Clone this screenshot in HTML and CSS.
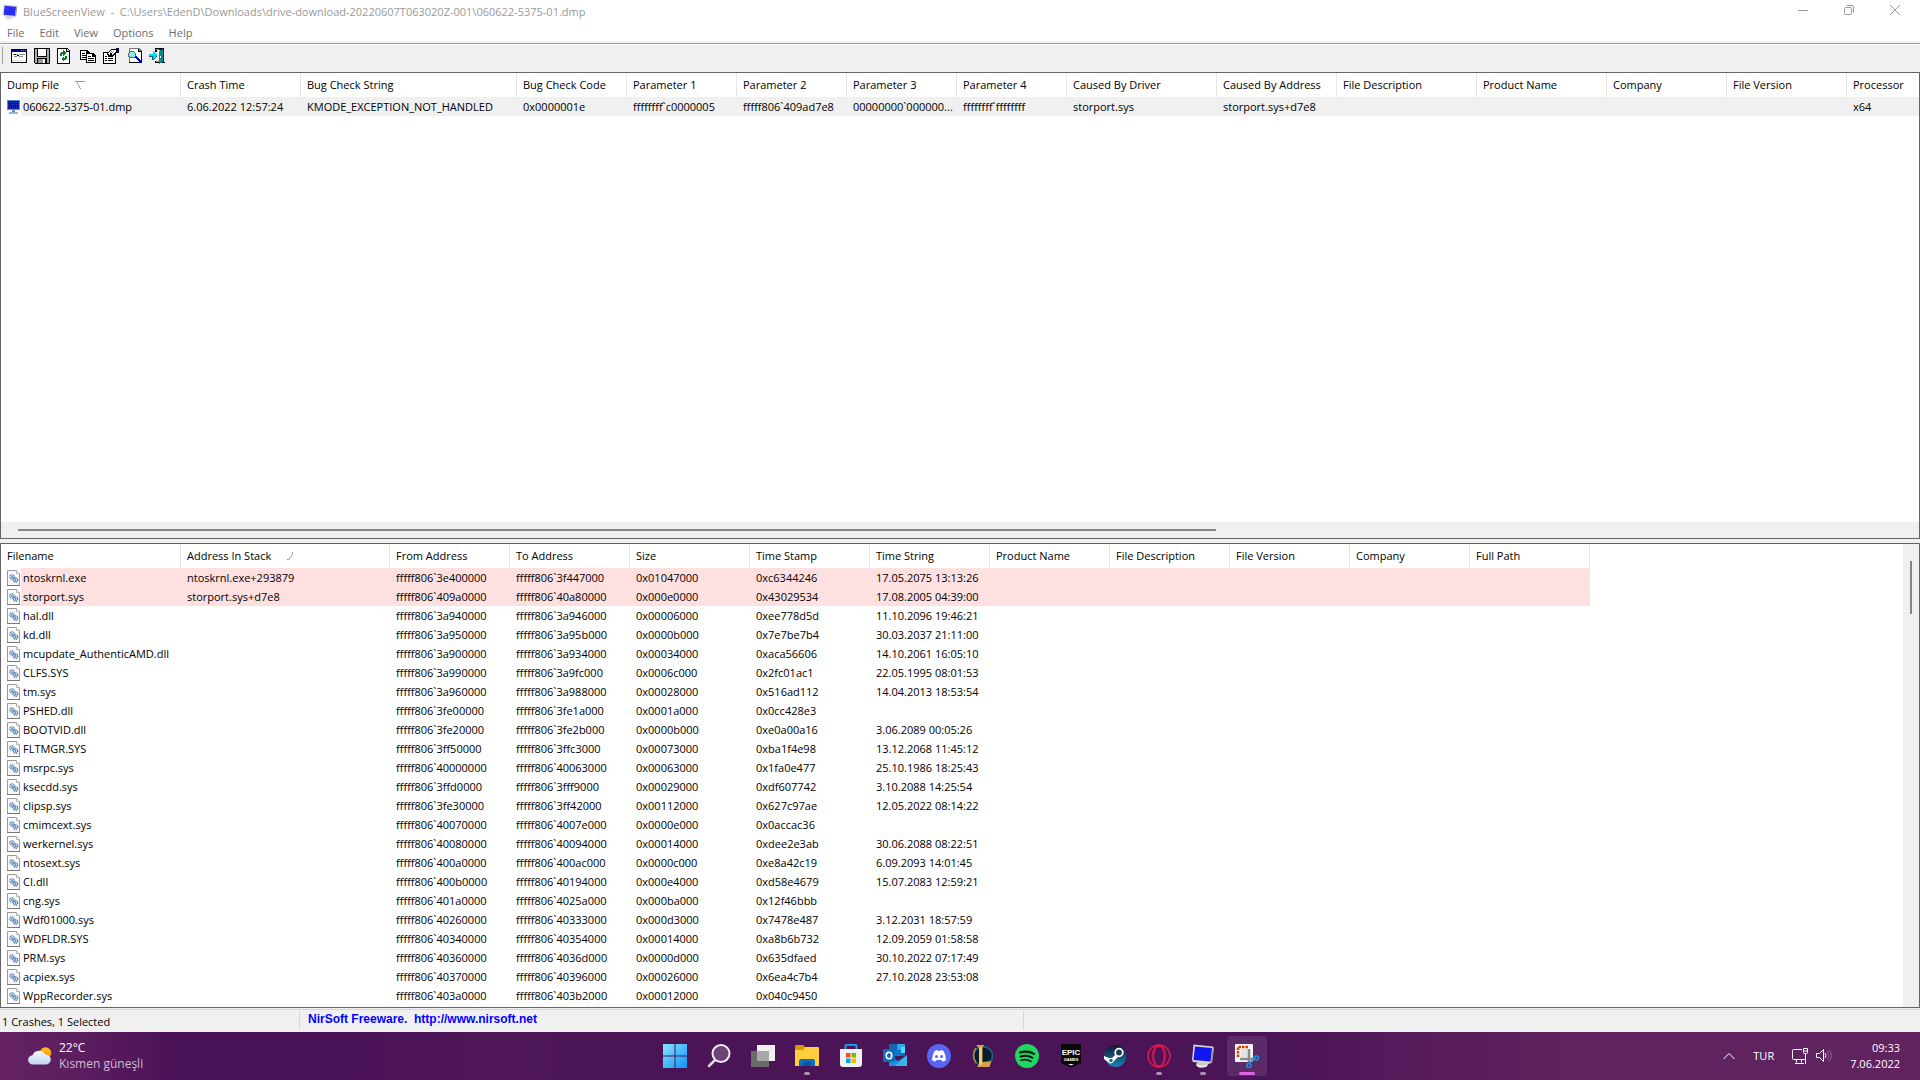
FILE: index.html
```html
<!DOCTYPE html>
<html lang="en">
<head>
    <meta charset="UTF-8">
    <meta name="viewport" content="width=device-width, initial-scale=1.0">
    <title>BlueScreenView</title>
    <link rel="stylesheet" href="styles.css">
</head>
<body>

    <!-- shared icons -->
    <svg class="sprite" aria-hidden="true">
        <symbol id="sysfile" viewBox="0 0 13 16">
            <path d="M.5.5h9l3 3v12H.5z" fill="#f9f9f9" stroke="#999"/>
            <path d="M9.500.5v3h3" fill="#fff" stroke="#b5b5b5"/>
            <path d="M0 15.500h13" stroke="#777"/>
            <circle cx="5" cy="7" r="2.200" fill="#e4eefa" stroke="#4d79ad" stroke-width="1.300" stroke-dasharray="1.200 .6"/>
            <circle cx="8.500" cy="10" r="2.200" fill="#cfe0f5" stroke="#3c689f" stroke-width="1.300" stroke-dasharray="1.200 .6"/>
            <circle cx="5" cy="7" r=".8" fill="#24548c"/>
            <circle cx="8.500" cy="10" r=".7" fill="#24548c"/>
        </symbol>
        <symbol id="bluemonitor" viewBox="0 0 24 24">
            <path d="M8 17l8 1 1 3-2 2-7 .5-3-2 .5-2z" fill="#c9c9c9"/>
            <path d="M6 20c3 2 8 2 10 0v2c-3 2-8 2-10 0z" fill="#eee"/>
            <path d="M2.500.5L22 2.500l1 1-2 15.500-4 1-15-2L1 16z" fill="#d5d2cc"/>
            <path d="M4 2.500l17 1.500-1.500 13.500L2.500 16z" fill="#1216f0"/>
            <path d="M22 3l1 .5-2 15.500-1.500-.5z" fill="#8f8c88"/>
        </symbol>
    </svg>

    <header class="titlebar">
        <svg class="app-icon" viewBox="0 0 24 24"><use href="#bluemonitor"/></svg>
        <h1>BlueScreenView&nbsp; -&nbsp; C:\Users\EdenD\Downloads\drive-download-20220607T063020Z-001\060622-5375-01.dmp</h1>
        <div class="window-buttons">
            <button aria-label="Minimize"><svg viewBox="0 0 10 10"><path d="M0 5.500h10"/></svg></button>
            <button aria-label="Restore"><svg viewBox="0 0 10 10"><rect x=".5" y="2.500" width="7" height="7" rx="1"/><path d="M2.500.5H8q1.500 0 1.500 1.500v5.500"/></svg></button>
            <button aria-label="Close"><svg viewBox="0 0 10 10"><path d="M0 0l10 10M10 0L0 10"/></svg></button>
        </div>
    </header>

    <nav class="menu">
        <button>File</button>
        <button>Edit</button>
        <button>View</button>
        <button>Options</button>
        <button>Help</button>
    </nav>

    <div class="toolbar">
        <button aria-label="Advanced options">
            <svg viewBox="0 0 16 16"><path d="M0 1h16v14H0z" fill="#000"/><path d="M1 2h14v12H1z" fill="#fff"/><path d="M1 2h14v2H1z" fill="#000080"/><path d="M10 2h1v1h-1zM12 2h1v1h-1zM14 2h1v1h-1zM2 6h5v1H2zM8 6h6v1H8zM3 8h3v1H3zM8 8h4v1H8z" fill="#888"/><path d="M3 6h2v1H3zM6 7h2v1H6z" fill="#000"/><path d="M1 12h14v1H1z" fill="#ddd"/></svg>
        </button>
        <button aria-label="Save">
            <svg viewBox="0 0 16 16"><path d="M0 0h16v16H1l-1-1z" fill="#000"/><path d="M1 1h2v8h10V1h2v14H1z" fill="#aaa"/><path d="M4 1h8v7H4z" fill="#fff"/><path d="M3 10h10v6H3z" fill="#000"/><path d="M4 11h7v4H4z" fill="#999"/><path d="M9 11h2v4H9z" fill="#fff"/></svg>
        </button>
        <button aria-label="Refresh">
            <svg viewBox="0 0 16 16"><path d="M0 0h10l3 3v13H0z" fill="#000"/><path d="M1 1h8v3h3v11H1z" fill="#fff"/><path d="M10 1v2h2z" fill="#ddd"/><path d="M3 8V5h1V4h2V2l3 3-3 3V6H5v2zM10 8v3H9v1H7v2l-3-3 3-3v2h1V8z" fill="#008020"/></svg>
        </button>
        <button aria-label="Copy">
            <svg viewBox="0 0 16 16"><path d="M0 2h7l3 3v7H0z" fill="#000"/><path d="M1 3h5v3h3v5H1z" fill="#fff"/><path d="M2 5h3v1H2zM2 7h5v1H2zM2 9h5v1H2z" fill="#000"/><path d="M6 5h7l3 3v7H6z" fill="#000"/><path d="M7 6h5v3h3v5H7z" fill="#fff"/><path d="M8 8h3v1H8zM8 10h6v1H8zM8 12h6v1H8z" fill="#000"/></svg>
        </button>
        <button aria-label="Properties">
            <svg viewBox="0 0 16 16"><path d="M0 4h13v12H0z" fill="#000"/><path d="M1 5h11v10H1z" fill="#fff"/><path d="M2 8h2v1H2zM5 8h3v1H5zM2 10h2v1H2zM5 10h5v1H5zM2 12h2v1H2zM5 12h5v1H5z" fill="#000"/><path d="M4 5l4-4h5V0h3v5h-3l-4 4-2-1-2 1z" fill="#000"/><path d="M5 5h1V4h1V3h1V2h5v2h-1v1h-1v1h-1v1H9V5H7v2H6z" fill="#fff"/><path d="M8 3h1v1H8zM10 3h1v1h-1zM9 4h1v1H9zM7 4h1v1H7z" fill="#888"/><path d="M14 0h2v5h-2z" fill="#000080"/></svg>
        </button>
        <button aria-label="Find">
            <svg viewBox="0 0 16 16"><path d="M3 0h10l3 3v12H3z" fill="#777"/><path d="M4 1h8v3h3v10H4z" fill="#fff"/><path d="M12 1h1v2h2v1h-3zM15 3h1v12h-1zM3 14h13v1H3z" fill="#000"/><path d="M3 3h5v1h1v1h1v4H9v1H4V9H2V5h1z" fill="#567"/><path d="M4 4h4v1h1v4H4V8H3V5h1z" fill="#7ee"/><path d="M5 4h1v1H5zM7 5h1v1H7zM4 6h1v1H4zM6 7h1v1H6z" fill="#fff"/><path d="M9 8h2v1h1v1h1v1h1v1h1v1h1v2h-2v-1h-1v-1h-1v-1h-1v-1h-1v-1H9z" fill="#0000c8"/></svg>
        </button>
        <button aria-label="Exit">
            <svg viewBox="0 0 16 16"><path d="M6 0h9v14h1v1H6v-2h1v1h4V2H8v2H6z" fill="#000"/><path d="M7 1h3v1H7zM7 13h3v1H7z" fill="#888"/><path d="M10 3l4-2v13l-4 2z" fill="#008c8c"/><path d="M11 8h1v2h-1z" fill="#fff"/><path d="M14 1h1v13h-1z" fill="#222"/><path d="M0 6h4V3h1v1h1v1h1v1h1v2H7v1H6v1H5v1H4V8H0z" fill="#00dcec"/><path d="M0 8h4v3h1v-1h1V9h1V8h1v1H7v1H6v1H5v1H3V9H0z" fill="#067"/></svg>
        </button>
    </div>

    <main class="panes">
        <section class="pane crashes">
            <div class="pane-body">
                <table class="list crash-list">
                    <colgroup>
                        <col class="w180"><col class="w120"><col class="w216"><col class="w110"><col class="w110"><col class="w110"><col class="w110"><col class="w110"><col class="w150"><col class="w120"><col class="w140"><col class="w130"><col class="w120"><col class="w120"><col>
                    </colgroup>
                    <thead>
                        <tr>
                            <th>Dump File <svg class="sort sort-first" viewBox="0 0 10 8"><path d="M0 .5h10M2 1l3 6.500h1"/></svg></th>
                            <th>Crash Time</th>
                            <th>Bug Check String</th>
                            <th>Bug Check Code</th>
                            <th>Parameter 1</th>
                            <th>Parameter 2</th>
                            <th>Parameter 3</th>
                            <th>Parameter 4</th>
                            <th>Caused By Driver</th>
                            <th>Caused By Address</th>
                            <th>File Description</th>
                            <th>Product Name</th>
                            <th>Company</th>
                            <th>File Version</th>
                            <th>Processor</th>
                        </tr>
                    </thead>
                    <tbody>
                        <tr class="selected">
                            <td class="name"><span class="icon"><svg viewBox="0 0 13 14"><path d="M0 0h13v10H0z" fill="#4b8fd0"/><path d="M1 1h11v8H1z" fill="#0a0aa8"/><path d="M1 2.500h11M1 4.500h11M1 6.500h11M1 8.500h11" stroke="#2f3fc4" stroke-dasharray="1 1"/><path d="M5 10h3v2H5z" fill="#5c8db8"/><path d="M2 12h9v2H2z" fill="#9fb4c6"/></svg></span>060622-5375-01.dmp</td>
                            <td>6.06.2022 12:57:24</td>
                            <td>KMODE_EXCEPTION_NOT_HANDLED</td>
                            <td>0x0000001e</td>
                            <td>ffffffff`c0000005</td>
                            <td>fffff806`409ad7e8</td>
                            <td>00000000`000000...</td>
                            <td>ffffffff`ffffffff</td>
                            <td>storport.sys</td>
                            <td>storport.sys+d7e8</td>
                            <td></td><td></td><td></td><td></td>
                            <td>x64</td>
                        </tr>
                    </tbody>
                </table>
            </div>
            <div class="scroll-x"><div class="thumb"></div></div>
        </section>

        <section class="pane drivers">
            <div class="pane-body">
                <table class="list driver-list">
                    <colgroup>
                        <col class="w180"><col class="w209"><col span="10" class="w120">
                    </colgroup>
                    <thead>
                        <tr>
                            <th>Filename</th>
                            <th>Address In Stack <svg class="sort" viewBox="0 0 6 8"><path d="M5.500 0v2L2 7.500H0"/></svg></th>
                            <th>From Address</th>
                            <th>To Address</th>
                            <th>Size</th>
                            <th>Time Stamp</th>
                            <th>Time String</th>
                            <th>Product Name</th>
                            <th>File Description</th>
                            <th>File Version</th>
                            <th>Company</th>
                            <th>Full Path</th>
                        </tr>
                    </thead>
                    <tbody>
                        <tr class="in-stack"><td class="name"><span class="icon"><svg><use href="#sysfile"/></svg></span>ntoskrnl.exe</td><td>ntoskrnl.exe+293879</td><td>fffff806`3e400000</td><td>fffff806`3f447000</td><td>0x01047000</td><td>0xc6344246</td><td>17.05.2075 13:13:26</td><td colspan="5"></td></tr>
                        <tr class="in-stack"><td class="name"><span class="icon"><svg><use href="#sysfile"/></svg></span>storport.sys</td><td>storport.sys+d7e8</td><td>fffff806`409a0000</td><td>fffff806`40a80000</td><td>0x000e0000</td><td>0x43029534</td><td>17.08.2005 04:39:00</td><td colspan="5"></td></tr>
                        <tr><td class="name"><span class="icon"><svg><use href="#sysfile"/></svg></span>hal.dll</td><td></td><td>fffff806`3a940000</td><td>fffff806`3a946000</td><td>0x00006000</td><td>0xee778d5d</td><td>11.10.2096 19:46:21</td></tr>
                        <tr><td class="name"><span class="icon"><svg><use href="#sysfile"/></svg></span>kd.dll</td><td></td><td>fffff806`3a950000</td><td>fffff806`3a95b000</td><td>0x0000b000</td><td>0x7e7be7b4</td><td>30.03.2037 21:11:00</td></tr>
                        <tr><td class="name"><span class="icon"><svg><use href="#sysfile"/></svg></span>mcupdate_AuthenticAMD.dll</td><td></td><td>fffff806`3a900000</td><td>fffff806`3a934000</td><td>0x00034000</td><td>0xaca56606</td><td>14.10.2061 16:05:10</td></tr>
                        <tr><td class="name"><span class="icon"><svg><use href="#sysfile"/></svg></span>CLFS.SYS</td><td></td><td>fffff806`3a990000</td><td>fffff806`3a9fc000</td><td>0x0006c000</td><td>0x2fc01ac1</td><td>22.05.1995 08:01:53</td></tr>
                        <tr><td class="name"><span class="icon"><svg><use href="#sysfile"/></svg></span>tm.sys</td><td></td><td>fffff806`3a960000</td><td>fffff806`3a988000</td><td>0x00028000</td><td>0x516ad112</td><td>14.04.2013 18:53:54</td></tr>
                        <tr><td class="name"><span class="icon"><svg><use href="#sysfile"/></svg></span>PSHED.dll</td><td></td><td>fffff806`3fe00000</td><td>fffff806`3fe1a000</td><td>0x0001a000</td><td>0x0cc428e3</td><td></td></tr>
                        <tr><td class="name"><span class="icon"><svg><use href="#sysfile"/></svg></span>BOOTVID.dll</td><td></td><td>fffff806`3fe20000</td><td>fffff806`3fe2b000</td><td>0x0000b000</td><td>0xe0a00a16</td><td>3.06.2089 00:05:26</td></tr>
                        <tr><td class="name"><span class="icon"><svg><use href="#sysfile"/></svg></span>FLTMGR.SYS</td><td></td><td>fffff806`3ff50000</td><td>fffff806`3ffc3000</td><td>0x00073000</td><td>0xba1f4e98</td><td>13.12.2068 11:45:12</td></tr>
                        <tr><td class="name"><span class="icon"><svg><use href="#sysfile"/></svg></span>msrpc.sys</td><td></td><td>fffff806`40000000</td><td>fffff806`40063000</td><td>0x00063000</td><td>0x1fa0e477</td><td>25.10.1986 18:25:43</td></tr>
                        <tr><td class="name"><span class="icon"><svg><use href="#sysfile"/></svg></span>ksecdd.sys</td><td></td><td>fffff806`3ffd0000</td><td>fffff806`3fff9000</td><td>0x00029000</td><td>0xdf607742</td><td>3.10.2088 14:25:54</td></tr>
                        <tr><td class="name"><span class="icon"><svg><use href="#sysfile"/></svg></span>clipsp.sys</td><td></td><td>fffff806`3fe30000</td><td>fffff806`3ff42000</td><td>0x00112000</td><td>0x627c97ae</td><td>12.05.2022 08:14:22</td></tr>
                        <tr><td class="name"><span class="icon"><svg><use href="#sysfile"/></svg></span>cmimcext.sys</td><td></td><td>fffff806`40070000</td><td>fffff806`4007e000</td><td>0x0000e000</td><td>0x0accac36</td><td></td></tr>
                        <tr><td class="name"><span class="icon"><svg><use href="#sysfile"/></svg></span>werkernel.sys</td><td></td><td>fffff806`40080000</td><td>fffff806`40094000</td><td>0x00014000</td><td>0xdee2e3ab</td><td>30.06.2088 08:22:51</td></tr>
                        <tr><td class="name"><span class="icon"><svg><use href="#sysfile"/></svg></span>ntosext.sys</td><td></td><td>fffff806`400a0000</td><td>fffff806`400ac000</td><td>0x0000c000</td><td>0xe8a42c19</td><td>6.09.2093 14:01:45</td></tr>
                        <tr><td class="name"><span class="icon"><svg><use href="#sysfile"/></svg></span>CI.dll</td><td></td><td>fffff806`400b0000</td><td>fffff806`40194000</td><td>0x000e4000</td><td>0xd58e4679</td><td>15.07.2083 12:59:21</td></tr>
                        <tr><td class="name"><span class="icon"><svg><use href="#sysfile"/></svg></span>cng.sys</td><td></td><td>fffff806`401a0000</td><td>fffff806`4025a000</td><td>0x000ba000</td><td>0x12f46bbb</td><td></td></tr>
                        <tr><td class="name"><span class="icon"><svg><use href="#sysfile"/></svg></span>Wdf01000.sys</td><td></td><td>fffff806`40260000</td><td>fffff806`40333000</td><td>0x000d3000</td><td>0x7478e487</td><td>3.12.2031 18:57:59</td></tr>
                        <tr><td class="name"><span class="icon"><svg><use href="#sysfile"/></svg></span>WDFLDR.SYS</td><td></td><td>fffff806`40340000</td><td>fffff806`40354000</td><td>0x00014000</td><td>0xa8b6b732</td><td>12.09.2059 01:58:58</td></tr>
                        <tr><td class="name"><span class="icon"><svg><use href="#sysfile"/></svg></span>PRM.sys</td><td></td><td>fffff806`40360000</td><td>fffff806`4036d000</td><td>0x0000d000</td><td>0x635dfaed</td><td>30.10.2022 07:17:49</td></tr>
                        <tr><td class="name"><span class="icon"><svg><use href="#sysfile"/></svg></span>acpiex.sys</td><td></td><td>fffff806`40370000</td><td>fffff806`40396000</td><td>0x00026000</td><td>0x6ea4c7b4</td><td>27.10.2028 23:53:08</td></tr>
                        <tr><td class="name"><span class="icon"><svg><use href="#sysfile"/></svg></span>WppRecorder.sys</td><td></td><td>fffff806`403a0000</td><td>fffff806`403b2000</td><td>0x00012000</td><td>0x040c9450</td><td></td></tr>
                        <tr><td class="name"><span class="icon"><svg><use href="#sysfile"/></svg></span></td></tr>
                    </tbody>
                </table>
            </div>
            <div class="scroll-y"><div class="thumb"></div></div>
        </section>
    </main>

    <footer class="status">
        <div class="status-count">1 Crashes, 1 Selected</div>
        <div class="status-link"><a href="http://www.nirsoft.net">NirSoft Freeware.&nbsp; http://www.nirsoft.net</a></div>
        <div class="status-rest"></div>
    </footer>

    <div class="taskbar">
        <button class="weather">
            <svg viewBox="0 0 24 18">
                <defs>
                    <linearGradient id="cloud" x2="0" y2="1"><stop stop-color="#f7f9fd"/><stop offset="1" stop-color="#bfd3ee"/></linearGradient>
                    <linearGradient id="sun" x2="0" y2="1"><stop stop-color="#ffc21a"/><stop offset="1" stop-color="#f58a0b"/></linearGradient>
                </defs>
                <circle cx="17.500" cy="6" r="5.800" fill="url(#sun)"/>
                <path d="M5 17.500a4.600 4.600 0 0 1-.5-9.200A6.800 6.800 0 0 1 17 7.500a5 5 0 0 1 1.500 10z" fill="url(#cloud)"/>
            </svg>
            <span><span class="temp">22°C</span><span class="sky">Kısmen güneşli</span></span>
        </button>

        <nav class="apps">
            <button aria-label="Start">
                <svg viewBox="0 0 24 24"><defs><linearGradient id="win" x2="1" y2="1"><stop stop-color="#8be3ff"/><stop offset="1" stop-color="#0a93f5"/></linearGradient></defs><path d="M0 0h11.500v11.500H0zM12.500 0H24v11.500H12.500zM0 12.500h11.500V24H0zM12.500 12.500H24V24H12.500z" fill="url(#win)"/></svg>
            </button>
            <button aria-label="Search">
                <svg viewBox="0 0 24 24"><circle cx="14" cy="9.500" r="8.500" fill="#fff" fill-opacity=".2" stroke="#eee" stroke-width="2"/><path d="M8 16l-6 6" stroke="#ddd" stroke-width="2.500" stroke-linecap="round"/></svg>
            </button>
            <button aria-label="Task View">
                <svg viewBox="0 0 24 24"><path d="M6 1h18v16H6z" fill="#f0f0f0"/><path d="M0 7h18v16H0z" fill="#6a6a6a"/><path d="M6 7h12v10H6z" fill="#a8a8a8"/></svg>
            </button>
            <button aria-label="File Explorer" class="running">
                <svg viewBox="0 0 24 24"><path d="M0 2q0-1 1-1h7l2 2v4H0z" fill="#dd9500"/><path d="M0 6h8l2-3h13q1 0 1 1v17q0 1-1 1H0z" fill="#ffce3d"/><path d="M4 22v-5q0-2 2-2h12q2 0 2 2v5z" fill="#0c6fc0"/><path d="M8 18h8v4H8z" fill="#0a559b"/></svg>
            </button>
            <button aria-label="Microsoft Store">
                <svg viewBox="0 0 24 24"><path d="M6.500 6V2q0-1.200 1.200-1.200h8.600q1.200 0 1.200 1.200v4" fill="none" stroke="#1ea8ee" stroke-width="1.800"/><path d="M1 5h22v15q0 3-3 3H4q-3 0-3-3z" fill="#f1f1f1"/><path d="M7 9h4.500v4.500H7z" fill="#f04f24"/><path d="M12.500 9H17v4.500h-4.500z" fill="#7eba00"/><path d="M7 14.500h4.500V19H7z" fill="#02a4ef"/><path d="M12.500 14.500H17V19h-4.500z" fill="#ffb901"/></svg>
            </button>
            <button aria-label="Outlook">
                <svg viewBox="0 0 24 24"><path d="M7 0h14q1 0 1 1v11H6V1q0-1 1-1z" fill="#1066b5"/><path d="M14 0h8v6h-8z" fill="#28a8ea"/><path d="M18 3h4v6h-4z" fill="#50d9ff"/><path d="M11 6h7v6h-7z" fill="#0b78d0"/><path d="M6 12l9 5 9-6v11H6z" fill="#1490df"/><path d="M12 22l12-11v11z" fill="#38b7ef"/><rect y="5" width="12" height="13" rx="1" fill="#0f6cbd"/><ellipse cx="6" cy="11.500" rx="2.800" ry="3.300" fill="none" stroke="#fff" stroke-width="1.600"/></svg>
            </button>
            <button aria-label="Discord">
                <svg viewBox="0 0 24 24"><circle cx="12" cy="12" r="12" fill="#5865f2"/><path d="M7.500 7q2-1 3-1l.5 1h2l.5-1q1 0 3 1 2.500 4 2.500 9-2 1.500-3.500 1.500L14.500 16h-5l-1 1.500Q7 17.500 5 16q0-5 2.500-9z" fill="#fff"/><circle cx="9.500" cy="12.500" r="1.500" fill="#5865f2"/><circle cx="14.500" cy="12.500" r="1.500" fill="#5865f2"/></svg>
            </button>
            <button aria-label="League of Legends">
                <svg viewBox="0 0 24 24"><circle cx="12" cy="12" r="9.500" fill="#071e30" stroke="#1c6c82" stroke-width="1.500"/><path d="M5 4q-5 7 0 15" fill="none" stroke="#b68a3c" stroke-width="1.500"/><path d="M5 1h8l-1.500 3v14l9-1-2 6H6l2-3V4z" fill="#d3a24a"/><path d="M8 4l3-1v17l-3 2z" fill="#f0cd78"/></svg>
            </button>
            <button aria-label="Spotify">
                <svg viewBox="0 0 24 24"><circle cx="12" cy="12" r="12" fill="#1ed760"/><g fill="none" stroke="#10131a" stroke-linecap="round"><path d="M5 8.500q7.500-2.300 14 1.400" stroke-width="2.200"/><path d="M5.500 12.500q6.500-2 12 1.200" stroke-width="1.900"/><path d="M6 16.200q5.500-1.500 10 1.200" stroke-width="1.600"/></g></svg>
            </button>
            <button aria-label="Epic Games">
                <svg viewBox="0 0 24 24"><path d="M2 1q0-1 1-1h18q1 0 1 1v18l-10 4.500L2 19z" fill="#080808"/><text x="12" y="11" class="epic" font-size="8" text-anchor="middle">EPIC</text><text x="12" y="17" class="games" font-size="4" text-anchor="middle">GAMES</text><path d="M9 20h6l-3 1.500z" fill="#eee"/></svg>
            </button>
            <button aria-label="Steam">
                <svg viewBox="0 0 24 24"><defs><linearGradient id="steam" x2="0" y2="1"><stop stop-color="#10172c"/><stop offset="1" stop-color="#1786b8"/></linearGradient></defs><circle cx="12.500" cy="12" r="11" fill="url(#steam)"/><path d="M1 12l7 3 4-4 3 2-5 5q-2 3-5 0L1 15z" fill="#fff"/><circle cx="16" cy="8.500" r="3.800" fill="#26324a" stroke="#fff" stroke-width="1.800"/><circle cx="8" cy="16.500" r="2.200" fill="#196487" stroke="#fff"/></svg>
            </button>
            <button aria-label="Opera GX" class="running">
                <svg viewBox="0 0 24 24"><g fill="none" stroke="#e8174b" stroke-width="1.400"><circle cx="12" cy="12" r="11"/><ellipse cx="12" cy="12" rx="5.500" ry="10.500"/><path d="M14 1.500q-9 1-9 10.500t9 10.500" stroke-width=".7"/><path d="M10 1.500q9 1 9 10.500t-9 10.500" stroke-width=".7"/></g></svg>
            </button>
            <button aria-label="BlueScreenView" class="running">
                <svg viewBox="0 0 24 24"><use href="#bluemonitor"/></svg>
            </button>
            <button aria-label="Snipping Tool" class="running active">
                <svg viewBox="0 0 24 24"><rect width="18" height="18" rx="1" fill="#f4f4f4"/><path d="M3 13V3h11" fill="none" stroke="#d83b01" stroke-width="2.500" stroke-dasharray="2.500 1"/><path d="M6 5h8v8H6z" fill="#e2e2e2"/><path d="M14 5v13M5 15h14" stroke="#8b8b8b" stroke-width="2.500"/><circle cx="14" cy="21.500" r="2" fill="none" stroke="#1695e6" stroke-width="1.600"/><circle cx="21.500" cy="14" r="2" fill="none" stroke="#1695e6" stroke-width="1.600"/><path d="M14.500 19l5-4" stroke="#1695e6" stroke-width="1.600"/></svg>
            </button>
        </nav>

        <div class="tray">
            <button aria-label="Show hidden icons"><svg class="chevron" viewBox="0 0 12 8"><path d="M.5 7L6 1.500 11.500 7"/></svg></button>
            <button class="lang">TUR</button>
            <button class="net-sound" aria-label="Network and volume">
                <svg viewBox="0 0 16 16"><path d="M10 1.500H1.500q-1 0-1 1v8q0 1 1 1H13M4.500 11.500v3M9.500 11.500v3M3 15.500h9M13.500 6v10M11.500.5h4v4q0 1-1 1h-2q-1 0-1-1zM11.500 3h4"/></svg>
                <svg viewBox="0 0 16 16"><path d="M.5 5.500h3l4-4v12l-4-4h-3zM9 5q2 2.500 0 5"/><path class="faint" d="M11 3q4 4.500 0 9M13 1.500q5 6 0 12"/></svg>
            </button>
            <button class="clock"><span>09:33</span><span>7.06.2022</span></button>
        </div>
    </div>

</body>
</html>
```

FILE: styles.css
```css
* {
    box-sizing: border-box;
}
body {
    margin: 0;
    height: 100vh;
    display: flex;
    flex-direction: column;
    overflow: hidden;
    background-color: #fff;
    color: #000;
    font-family: "Open Sans", "Noto Sans", sans-serif;
    font-size: 11px;
    line-height: 16px;
}
button {
    margin: 0;
    padding: 0;
    border: none;
    background: none;
    color: inherit;
    font: inherit;
}
svg {
    display: block;
}
.sprite {
    position: absolute;
    width: 0;
    height: 0;
}

/* title and menu */
.titlebar {
    display: flex;
    align-items: center;
    height: 24px;
    padding: 0 2px;
    color: #999;
    flex-shrink: 0;
}
.app-icon {
    width: 16px;
    height: 16px;
    opacity: 0.9;
}
.titlebar h1 {
    margin: 0 auto 0 5px;
    font-size: 11px;
    font-weight: normal;
}
.window-buttons {
    display: flex;
    align-self: stretch;
    padding-bottom: 4px;
}
.window-buttons button {
    display: flex;
    align-items: center;
    justify-content: center;
    width: 46px;
}
.window-buttons svg {
    width: 10px;
    height: 10px;
    fill: none;
    stroke: #999;
}
.menu {
    display: flex;
    gap: 15px;
    height: 17px;
    padding-left: 7px;
    color: #6d6d6d;
    flex-shrink: 0;
}
.toolbar {
    display: flex;
    align-items: flex-end;
    height: 31px;
    padding: 0 0 8px 7px;
    border-top: 2px solid #f0f0f0;
    background: linear-gradient(#a0a0a0 0 1px, #fff 1px 2px, #f0f0f0 2px);
    flex-shrink: 0;
}
.toolbar::before {
    content: "";
    width: 1px;
    height: 17px;
    margin: 0 4px 0 -5px;
    background-color: #a0a0a0;
}
.toolbar button {
    display: flex;
    justify-content: center;
    width: 23px;
}
.toolbar svg {
    width: 16px;
    height: 16px;
    shape-rendering: crispEdges;
}

/* list panes */
.panes {
    flex: 1;
    min-height: 0;
    display: flex;
    flex-direction: column;
    gap: 4px;
    background-color: #f0f0f0;
}
.pane {
    display: flex;
    min-height: 0;
    border: 1px solid #646464;
    background-color: #fff;
}
.crashes {
    flex: 467 1 0;
    flex-direction: column;
}
.drivers {
    flex: 465 1 0;
}
.pane-body {
    flex: 1;
    min-width: 0;
    min-height: 0;
    overflow: hidden;
}
.list {
    table-layout: fixed;
    border-collapse: collapse;
}
.crash-list {
    width: 100%;
}
.driver-list {
    width: 1589px;
}
.w110 { width: 110px; }
.w120 { width: 120px; }
.w130 { width: 130px; }
.w140 { width: 140px; }
.w150 { width: 150px; }
.w180 { width: 180px; }
.w209 { width: 209px; }
.w216 { width: 216px; }
.list th, .list td {
    padding: 0 0 0 6px;
    text-align: left;
    font-weight: normal;
    white-space: nowrap;
    overflow: hidden;
}
.list th {
    height: 24px;
    background: linear-gradient(#e5e5e5, #e5e5e5) right / 1px 100% no-repeat;
}
.crash-list th:last-child {
    background: none;
}
.list td {
    height: 19px;
}
.list td.name {
    padding: 0;
}
.icon {
    display: inline-flex;
    align-items: center;
    justify-content: flex-end;
    width: 20px;
    height: 19px;
    margin-right: 2px;
    padding-right: 1px;
    background-color: #fff;
    vertical-align: top;
}
.name {
    line-height: 19px;
}
.icon svg {
    width: 13px;
    height: 16px;
}
.selected {
    background-color: #f0f0f0;
}
.in-stack {
    background-color: #ffe0e0;
}
.sort {
    display: inline-block;
    width: 6px;
    height: 8px;
    margin-left: 13px;
    fill: none;
    stroke: #999;
}
.sort-first {
    width: 10px;
}
.scroll-x {
    height: 16px;
    padding: 7px 0 0 17px;
    background-color: #f0f0f0;
}
.scroll-x .thumb {
    width: 63%;
    height: 2px;
    background-color: #868686;
}
.scroll-y {
    width: 16px;
    padding: 17px 0 0 7px;
    background-color: #f0f0f0;
}
.scroll-y .thumb {
    width: 2px;
    height: 53px;
    background-color: #868686;
}

/* status bar */
.status {
    display: flex;
    height: 24px;
    padding: 3px 0 2px;
    background: linear-gradient(#f0f0f0 0 1px, #d7d7d7 1px 2px, #f0f0f0 2px);
    flex-shrink: 0;
}
.status-count {
    width: 300px;
    padding: 3px 2px 0;
    border-right: 1px solid #d7d7d7;
}
.status-link {
    width: 724px;
    padding-left: 8px;
    border-right: 1px solid #d7d7d7;
    font-family: "Liberation Sans", Arial, sans-serif;
    font-size: 12px;
    font-weight: bold;
}
.status-link a {
    color: #0000ff;
    text-decoration: none;
}

/* taskbar */
.taskbar {
    display: grid;
    grid-template-columns: 1fr auto 1fr;
    align-items: center;
    height: 48px;
    background: linear-gradient(90deg, #642262 0, #5c1e5f 4%, #4a1256 9%, #4a1256 18%, #501858 26%, #4a1456 34%, #4a1456 66%, #561b5b 74%, #60235f 82%, #60235f);
    color: #fff;
    flex-shrink: 0;
}
.weather {
    display: flex;
    align-items: center;
    gap: 7px;
    padding-left: 28px;
    font-size: 12px;
    text-align: left;
}
.weather svg {
    width: 24px;
    height: 18px;
}
.temp, .sky, .clock span {
    display: block;
}
.sky {
    color: #d0bdd3;
}
.apps {
    display: flex;
    gap: 4px;
    padding-left: 2px;
}
.apps button {
    position: relative;
    display: flex;
    align-items: center;
    justify-content: center;
    width: 40px;
    height: 40px;
    border-radius: 4px;
}
.apps svg {
    width: 24px;
    height: 24px;
}
.apps .active {
    background-color: rgba(255, 255, 255, 0.1);
}
.running::after {
    content: "";
    position: absolute;
    bottom: 1px;
    left: 17px;
    width: 6px;
    height: 3px;
    border-radius: 2px;
    background-color: #ab92b2;
}
.running.active::after {
    left: 12px;
    width: 16px;
    background-color: #dd64e8;
}
.epic, .games {
    fill: #fff;
    font-family: "Liberation Sans Narrow", "Liberation Sans", sans-serif;
    font-weight: bold;
}
.tray {
    display: flex;
    align-items: center;
    justify-content: flex-end;
    gap: 18px;
    padding-right: 20px;
}
.tray svg {
    width: 16px;
    height: 16px;
    fill: none;
    stroke: #fff;
}
.tray .chevron {
    width: 12px;
    height: 8px;
}
.net-sound {
    display: flex;
    gap: 8px;
}
.tray .faint {
    stroke: #8a628c;
}
.clock {
    text-align: right;
}
```
